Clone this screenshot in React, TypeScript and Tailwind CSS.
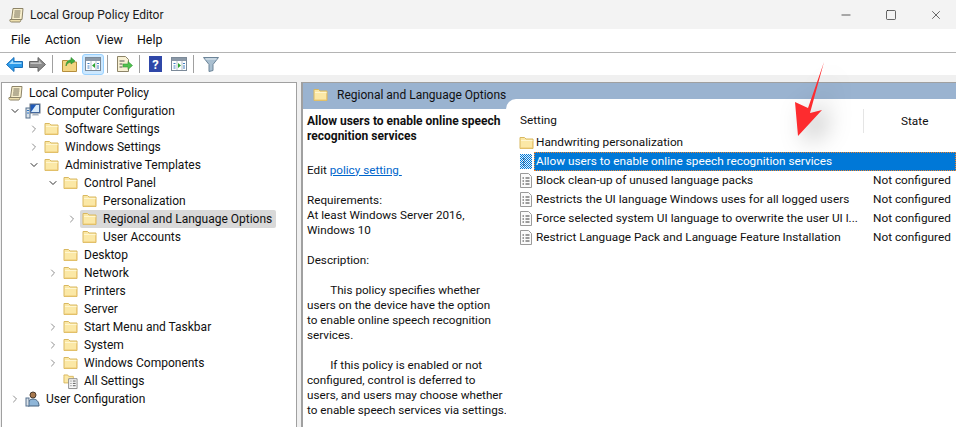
import { ChevronDown, ChevronRight, Minus, Square, X } from "lucide-react";

const TREE = [
  { label: "Computer Configuration", level: 0, arrow: "open", icon: "computer" },
  { label: "Software Settings", level: 1, arrow: "closed", icon: "folder" },
  { label: "Windows Settings", level: 1, arrow: "closed", icon: "folder" },
  { label: "Administrative Templates", level: 1, arrow: "open", icon: "folder" },
  { label: "Control Panel", level: 2, arrow: "open", icon: "folder" },
  { label: "Personalization", level: 3, arrow: "none", icon: "folder" },
  { label: "Regional and Language Options", level: 3, arrow: "closed", icon: "folder", selected: true },
  { label: "User Accounts", level: 3, arrow: "none", icon: "folder" },
  { label: "Desktop", level: 2, arrow: "none", icon: "folder" },
  { label: "Network", level: 2, arrow: "closed", icon: "folder" },
  { label: "Printers", level: 2, arrow: "none", icon: "folder" },
  { label: "Server", level: 2, arrow: "none", icon: "folder" },
  { label: "Start Menu and Taskbar", level: 2, arrow: "closed", icon: "folder" },
  { label: "System", level: 2, arrow: "closed", icon: "folder" },
  { label: "Windows Components", level: 2, arrow: "closed", icon: "folder" },
  { label: "All Settings", level: 2, arrow: "none", icon: "settings" },
  { label: "User Configuration", level: 0, arrow: "closed", icon: "user" },
];

const INDENT = ["pl-[7px]", "pl-[26px]", "pl-[45px]", "pl-[64px]"];

const POLICIES = [
  { name: "Allow users to enable online speech recognition services", state: "", selected: true },
  { name: "Block clean-up of unused language packs", state: "Not configured" },
  { name: "Restricts the UI language Windows uses for all logged users", state: "Not configured" },
  { name: "Force selected system UI language to overwrite the user UI l...", state: "Not configured" },
  { name: "Restrict Language Pack and Language Feature Installation", state: "Not configured" },
];

const DESCRIPTION = [
  "Requirements:",
  "At least Windows Server 2016,",
  "Windows 10",
  "",
  "Description:",
  "",
  "\u00a0\u00a0\u00a0\u00a0\u00a0\u00a0\u00a0\u00a0This policy specifies whether",
  "users on the device have the option",
  "to enable online speech recognition",
  "services.",
  "",
  "\u00a0\u00a0\u00a0\u00a0\u00a0\u00a0\u00a0\u00a0If this policy is enabled or not",
  "configured, control is deferred to",
  "users, and users may choose whether",
  "to enable speech services via settings.",
];

const Folder = () => (
  <svg width="15" height="14" viewBox="0 0 15 14" className="shrink-0">
    <path d="M1 3V1.500h4.500L7 3h7v9.500H1z" fill="#fbe8a6" stroke="#d9b860" />
    <path d="M2 4.500h11.500" stroke="#fff6d0" />
    <path d="M1.500 12h12V6" fill="none" stroke="#ecc873" />
  </svg>
);

const Scroll = () => (
  <svg width="16" height="16" viewBox="0 0 16 16" className="shrink-0">
    <path d="M4 1.500h10l-1 11H2.500z" fill="#f7eecb" stroke="#8d8468" />
    <path d="M1 12.500h10.500c.5 1.500 0 2-.5 2.500H2.500C1 15 .5 13.500 1 12.500z" fill="#efe0ae" stroke="#8d8468" />
    <path d="M5.500 4h6M5.300 6h6M5 8h6M4.800 10h6" stroke="#77705c" />
  </svg>
);

const Computer = () => (
  <svg width="16" height="16" viewBox="0 0 16 16" className="shrink-0">
    <rect x="5" y="1" width="10" height="9" fill="#1d58b8" stroke="#6a7684" />
    <path d="M6 9 11 2h3v7z" fill="#d9ecfb" />
    <path d="M8 10.500h5l1 2H7z" fill="#a9b4bf" />
    <rect x="1" y="5" width="4" height="10" fill="#dbe3ea" stroke="#56718e" />
    <path d="M2 7.500h2M2 10h2" stroke="#2773c7" />
  </svg>
);

const User = () => (
  <svg width="15" height="16" viewBox="0 0 15 16" className="shrink-0">
    <circle cx="8" cy="4" r="3" fill="#a8794f" stroke="#4a3b2d" />
    <path d="M3 15c0-5 2-7 5-7s6 2 6 7z" fill="#8fb6d8" stroke="#46637e" />
    <rect x="1" y="7" width="3" height="8" fill="#dbe3ea" stroke="#56718e" />
  </svg>
);

const Settings = () => (
  <svg width="15" height="17" viewBox="0 0 16 17" className="shrink-0">
    <path d="M1 3V1.500h4L6 3h5v7H1z" fill="#fbe8a6" stroke="#d9b860" />
    <path d="M6 5.500h9v10.500H6z" fill="#f8f8f8" stroke="#8a8a8a" />
    <path d="M8 8h1M10.500 8h3M8 10.500h1M10.500 10.500h3M8 13h1M10.500 13h3" stroke="#555" />
  </svg>
);

const PolicyPage = () => (
  <svg width="14" height="15" viewBox="0 0 14 15" className="shrink-0">
    <path d="M1.500.5h8l3 3v11h-11z" fill="#fbfbfb" stroke="#9a9a9a" />
    <path d="M3.500 5h1.500M6.500 5h4M3.500 8h1.500M6.500 8h4M3.500 11h1.500M6.500 11h4" stroke="#3a3a3a" />
  </svg>
);

const DitherPage = () => (
  <svg width="14" height="15" viewBox="0 0 14 15" className="shrink-0">
    <defs>
      <pattern id="dither" width="2" height="2" patternUnits="userSpaceOnUse">
        <rect width="2" height="2" fill="#0078d7" />
        <rect width="1" height="1" fill="#e4f0fb" />
        <rect x="1" y="1" width="1" height="1" fill="#e4f0fb" />
      </pattern>
    </defs>
    <rect x="1" width="12" height="15" fill="url(#dither)" />
    <path d="M4 5h1.500M4 8h1.500M4 11h1.500" stroke="#0b3a68" />
  </svg>
);

const PaneIcon = ({ back }: { back?: boolean }) => (
  <svg width="16" height="14" viewBox="0 0 16 14">
    <rect x=".5" y=".5" width="15" height="13" fill="#fff" stroke="#7c8a99" />
    <rect x="1" y="1" width="14" height="3" fill="#8b99a8" />
    <path d="M6 4v9M11 4v9" stroke="#b7c2cc" />
    <path d={back ? "M10 6v5L7 8.500z" : "M7 6v5l3-2.500z"} fill="#2aa52f" />
    <path d="M2.500 6.500h2M2.500 9h2M2.500 11h2M12 6.500h2M12 9h2M12 11h2" stroke="#3f7fc1" />
  </svg>
);

const TreeIcon = ({ icon }: { icon: string }) => {
  if (icon === "computer") return <Computer />;
  if (icon === "user") return <User />;
  if (icon === "settings") return <Settings />;
  return <Folder />;
};

export default function App() {
  return (
    <div className="relative flex h-[427px] w-[956px] flex-col overflow-hidden bg-[#f0f0f0] font-['Roboto',sans-serif] text-[12px] text-[#101010]">
      {/* title bar */}
      <div className="flex h-[29px] items-center bg-[#f3f3f3] pl-[9px] text-[12px]">
        <Scroll />
        <span className="ml-[5px] pt-[1px] text-[#1a1a1a]">Local Group Policy Editor</span>
        <div className="ml-auto flex items-center gap-[32px] pr-[13px] text-[#1a1a1a]">
          <Minus size={14} strokeWidth={1.2} />
          <Square size={12} strokeWidth={1.3} />
          <X size={14} strokeWidth={1.1} />
        </div>
      </div>

      {/* menu */}
      <div className="flex h-[24px] items-center border-b border-[#b4b4b4] bg-white pl-[11px] text-[12.400px]">
        <span className="w-[34px]">File</span>
        <span className="w-[51px]">Action</span>
        <span className="w-[41px]">View</span>
        <span>Help</span>
      </div>

      {/* toolbar */}
      <div className="flex h-[22px] items-center bg-white pl-[6px]">
        <svg width="17" height="15" viewBox="0 0 17 15">
          <path d="M8 .5v4h8.500v6H8v4L.5 7.500z" fill="#2c9bea" stroke="#1a6fb8" />
          <path d="M7 3v2.500h8.500V7H3z" fill="#a7dcfb" />
        </svg>
        <svg width="17" height="15" viewBox="0 0 17 15" className="ml-[6px]">
          <path d="M9 .5v4H.5v6H9v4l7.500-7z" fill="#8c8c8c" stroke="#666" />
          <path d="M10 3v2.500H1.500V7H13z" fill="#c2c2c2" />
        </svg>
        <div className="mx-[5px] ml-[6px] h-[18px] w-px bg-[#a0a0a0]" />
        <svg width="15" height="16" viewBox="0 0 15 16" className="ml-[4px]">
          <path d="M.5 4.500h5l1 1.500h8v9.500H.5z" fill="#f3d582" stroke="#b58e3c" />
          <path d="M4 10c0-4 2-6 5-6V1.500L13 5 9 8V6C7 6 5 7.500 4 10z" fill="#3fae3f" stroke="#2b862b" strokeWidth=".6" />
        </svg>
        <div className="ml-[5px] flex h-[21px] w-[22px] items-center justify-center rounded-[3px] border border-[#99d1ff] bg-[#cce8ff]">
          <PaneIcon back />
        </div>
        <div className="ml-[3px] mr-[8px] h-[18px] w-px bg-[#a0a0a0]" />
        <svg width="17" height="16" viewBox="0 0 17 16">
          <path d="M1.500.5h8l3 3v12h-11z" fill="#f8f1d4" stroke="#8d8468" />
          <path d="M3.500 5h5M3.500 8h3M3.500 11h3" stroke="#555" />
          <path d="M7 8h5V5.500l4.500 4-4.500 4V11H7z" fill="#4fc24f" stroke="#359635" strokeWidth=".6" />
        </svg>
        <div className="ml-[6px] mr-[9px] h-[18px] w-px bg-[#a0a0a0]" />
        <div className="flex h-[16px] w-[13px] items-center justify-center bg-[#2f47a8] text-[13px] font-bold leading-none text-white">?</div>
        <div className="ml-[9px] mr-[6px]">
          <PaneIcon />
        </div>
        <div className="mr-[9px] h-[18px] w-px bg-[#a0a0a0]" />
        <svg width="16" height="15" viewBox="0 0 16 15">
          <path d="M.5.5h15L10 7.500v6l-4 1v-7z" fill="#a9bfd0" stroke="#6c8498" />
          <path d="M2.500 2h11" stroke="#e6eef4" />
        </svg>
      </div>

      {/* panes */}
      <div className="mt-[7px] flex min-h-0 flex-1 gap-[4px] pl-px">
        {/* tree */}
        <div className="w-[296px] border-r border-t border-l border-[#a0a0a0] bg-white pt-px">
          <div className="flex h-[18px] items-center pl-[6px]">
            <Scroll />
            <span className="ml-[5px]">Local Computer Policy</span>
          </div>
          {TREE.map((row) => (
            <div key={row.label} className={`flex h-[18px] items-center ${INDENT[row.level]}`}>
              <div className="flex w-[11px] shrink-0 justify-center">
                {row.arrow === "open" && <ChevronDown size={12} strokeWidth={2} className="shrink-0 text-[#303030]" />}
                {row.arrow === "closed" && <ChevronRight size={12} strokeWidth={2} className="shrink-0 text-[#909090]" />}
              </div>
              <div className={`ml-[3px] flex h-[18px] items-center gap-[6px] whitespace-nowrap rounded-[2px] pl-[2px] pr-[4px] ${row.selected ? "w-[196px] bg-[#d9d9d9]" : ""}`}>
                <TreeIcon icon={row.icon} />
                <span>{row.label}</span>
              </div>
            </div>
          ))}
        </div>

        {/* right side */}
        <div className="flex min-w-0 flex-1 flex-col border-l-2 border-t border-[#a0a0a0] bg-white">
          <div className="flex h-[26px] shrink-0 items-center bg-[#9ab3d0] pl-[10px] pb-[2px]">
            <Folder />
            <span className="ml-[9px] text-[#101010]">Regional and Language Options</span>
          </div>
          <div className="flex min-h-0 flex-1">
            <div className="w-[203px] shrink-0 whitespace-nowrap pl-[4px] pt-[5px] text-[11.700px] leading-[15px]">
              <div className="text-[12px] font-bold">
                Allow users to enable online speech
                <br />
                recognition services
              </div>
              <div className="mt-[18.500px]">
                Edit <span className="text-[#0066cc] underline">policy setting{"\u00a0"}</span>
              </div>
              <div className="mt-[15px] whitespace-pre">
                {DESCRIPTION.map((line, i) => (
                  <div key={i} className="h-[15px]">{line}</div>
                ))}
              </div>
            </div>

            {/* settings list */}
            <div className="relative -mt-[10px] flex-1 rounded-tl-[10px] bg-white text-[11.800px]">
              <div className="flex h-[34px] items-end">
                <span className="ml-[14px] w-[343px] pb-[3px]">Setting</span>
                <div className="flex h-[24px] items-center border-l border-[#e5e5e5] pl-[37px] pt-[1px]">State</div>
              </div>
              <div className="flex h-[19px] items-center pl-[13px]">
                <Folder />
                <span className="ml-[2px]">Handwriting personalization</span>
              </div>
              {POLICIES.map((p) => (
                <div key={p.name} className="flex h-[19px] items-center pl-[13px]">
                  {p.selected ? <DitherPage /> : <PolicyPage />}
                  <div className={`ml-px flex h-[19px] flex-1 items-center whitespace-nowrap border px-px ${p.selected ? "border-dotted border-[#f0842c] bg-[#0078d7] text-white" : "border-transparent"}`}>
                    <span className="w-[337px] shrink-0">{p.name}</span>
                    <span>{p.state}</span>
                  </div>
                </div>
              ))}
            </div>
          </div>
        </div>
      </div>

      {/* red annotation arrow */}
      <svg
        width="60"
        height="90"
        viewBox="0 0 60 90"
        className="absolute left-[785px] top-[55px] drop-shadow-[10px_8px_12px_rgba(0,0,0,0.3)]"
      >
        <path d="M39 7 25 58l12-3-24 26-3-34 13 6z" fill="#fd2c2f" />
      </svg>
    </div>
  );
}
